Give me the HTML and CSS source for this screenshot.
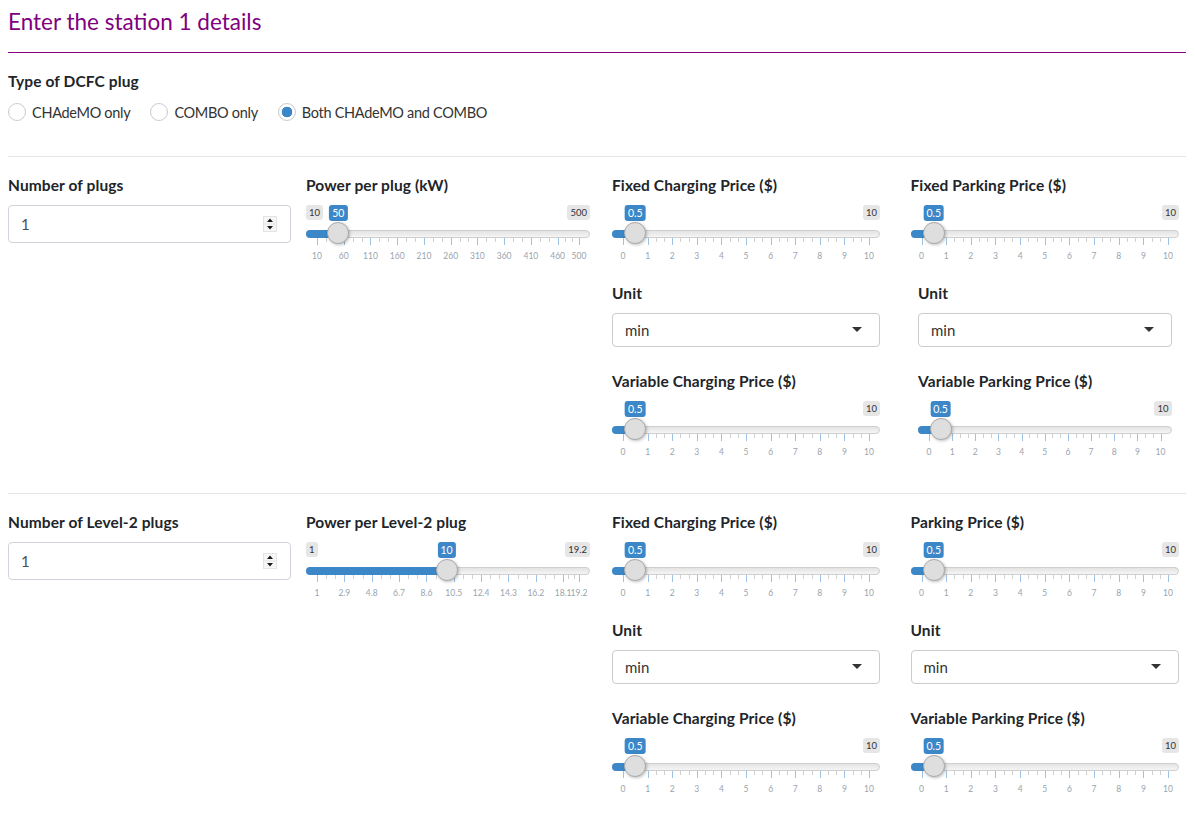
FILE: index.html
```html
<!DOCTYPE html>
<html lang="en">
<head>
<meta charset="utf-8">
<title>Station details</title>
<link rel="stylesheet" href="styles.css">
</head>
<body>
<h3 class="title">Enter the station 1 details</h3>
<hr class="rule-accent">
<div class="field-label">Type of DCFC plug</div>
<div class="radios">
  <label class="radio"><input type="radio" name="plug"><span>CHAdeMO only</span></label>
  <label class="radio"><input type="radio" name="plug"><span>COMBO only</span></label>
  <label class="radio"><input type="radio" name="plug" checked><span>Both CHAdeMO and COMBO</span></label>
</div>
<hr class="rule rule-first">

<section class="row">
  <div class="col col-a">
    <div class="field-label">Number of plugs</div>
    <div class="num-wrap">
      <input class="num" type="number" value="1">
      <svg class="spin" width="14" height="16" viewBox="0 0 14 16" aria-hidden="true"><rect width="14" height="16" fill="#e4e4e4"/><rect x="1" y="1" width="12" height="6.5" fill="#f6f6f6"/><rect x="1" y="8.5" width="12" height="6.5" fill="#f6f6f6"/><path d="M7 2.5 10 6H4zM4 10h6l-3 3.5z" fill="#1a1a1a"/></svg>
    </div>
  </div>
  <div class="col col-b">
    <div class="field-label">Power per plug (kW)</div>
    <div class="slider" data-min="10" data-max="500" data-value="50" data-ticks="10,60,110,160,210,260,310,360,410,460,500"></div>
  </div>
  <div class="col col-c">
    <div class="field-label">Fixed Charging Price ($)</div>
    <div class="slider" data-min="0" data-max="10" data-value="0.5"></div>
    <div class="field-label">Unit</div>
    <div class="select">min</div>
    <div class="field-label">Variable Charging Price ($)</div>
    <div class="slider" data-min="0" data-max="10" data-value="0.5"></div>
  </div>
  <div class="col col-d">
    <div class="field-label">Fixed Parking Price ($)</div>
    <div class="slider" data-min="0" data-max="10" data-value="0.5"></div>
    <div class="inset">
      <div class="field-label">Unit</div>
      <div class="select">min</div>
      <div class="field-label">Variable Parking Price ($)</div>
      <div class="slider" data-min="0" data-max="10" data-value="0.5"></div>
    </div>
  </div>
</section>

<hr class="rule">

<section class="row">
  <div class="col col-a">
    <div class="field-label">Number of Level-2 plugs</div>
    <div class="num-wrap">
      <input class="num" type="number" value="1">
      <svg class="spin" width="14" height="16" viewBox="0 0 14 16" aria-hidden="true"><rect width="14" height="16" fill="#e4e4e4"/><rect x="1" y="1" width="12" height="6.5" fill="#f6f6f6"/><rect x="1" y="8.5" width="12" height="6.5" fill="#f6f6f6"/><path d="M7 2.5 10 6H4zM4 10h6l-3 3.5z" fill="#1a1a1a"/></svg>
    </div>
  </div>
  <div class="col col-b">
    <div class="field-label">Power per Level-2 plug</div>
    <div class="slider" data-min="1" data-max="19.2" data-value="10" data-ticks="1,2.9,4.8,6.7,8.6,10.5,12.4,14.3,16.2,18.1,19.2"></div>
  </div>
  <div class="col col-c">
    <div class="field-label">Fixed Charging Price ($)</div>
    <div class="slider" data-min="0" data-max="10" data-value="0.5"></div>
    <div class="field-label">Unit</div>
    <div class="select">min</div>
    <div class="field-label">Variable Charging Price ($)</div>
    <div class="slider" data-min="0" data-max="10" data-value="0.5"></div>
  </div>
  <div class="col col-d">
    <div class="field-label">Parking Price ($)</div>
    <div class="slider" data-min="0" data-max="10" data-value="0.5"></div>
    <div class="field-label">Unit</div>
    <div class="select">min</div>
    <div class="field-label">Variable Parking Price ($)</div>
    <div class="slider" data-min="0" data-max="10" data-value="0.5"></div>
  </div>
</section>
<script src="slider.js"></script>
</body>
</html>
```
FILE: styles.css
```css
* { box-sizing: border-box; }
html, body { margin: 0; overflow: hidden; }
body {
  height: 819px;
  padding: 0 10px 0 8px;
  background: #fff;
  color: #212529;
  font-family: "Lato", "Noto Sans", sans-serif;
  font-size: 15px;
}
.title {
  margin: 0;
  height: 52px;
  padding-top: 8px;
  font-size: 22.5px;
  line-height: 28px;
  font-weight: 400;
  color: #800080;
}
.rule-accent { margin: 0 0 16px; height: 1px; border: 0; background: #800080; }
.rule { margin: 16px 0; height: 1px; border: 0; background: #e5e5e5; }
.rule-first { margin-top: 33px; }
.field-label {
  height: 24px;
  margin-bottom: 8px;
  font-weight: 700;
  font-size: 15.5px;
  letter-spacing: .1px;
  line-height: 24px;
  color: #212529;
}
.radios { display: flex; gap: 20px; height: 22px; }
.radio { display: flex; align-items: center; gap: 6px; color: #333; font-size: 14.5px; letter-spacing: -.3px; }
.radio input {
  appearance: none;
  margin: 0;
  width: 18px;
  height: 18px;
  border: 1px solid #c8ccd0;
  border-radius: 50%;
  background: #fff;
}
.radio input:checked {
  background: radial-gradient(circle, #3c87c7 0 5px, #fff 5.6px);
}
.row { display: grid; grid-template-columns: 298px 306px 298.5px 1fr; }
.col-a { padding-right: 15px; }
.col-b { padding-right: 22px; }
.col-c { padding-right: 30.5px; }
.col-d { padding-right: 7px; }
.inset { padding: 0 7.5px; }
.num-wrap { position: relative; }
.num {
  display: block;
  width: 100%;
  height: 38px;
  padding: 0 12px;
  border: 1px solid #ced4da;
  border-radius: 4px;
  color: #495057;
  font: 400 15px "Lato", sans-serif;
  appearance: textfield;
}
.num::-webkit-inner-spin-button { appearance: none; }
.spin { position: absolute; top: 11px; right: 14px; }
.select {
  position: relative;
  height: 34px;
  margin-bottom: 22px;
  padding-left: 12px;
  border: 1px solid #ccc;
  border-radius: 4px;
  color: #333;
  font-size: 15px;
  line-height: 33px;
}
.select::after {
  content: "";
  position: absolute;
  top: 13px;
  right: 17px;
  border-style: solid;
  border-width: 5px 5.5px 0;
  border-color: #333 transparent transparent;
}
.slider { position: relative; height: 76px; }
.badge {
  position: absolute;
  top: 0;
  height: 15px;
  padding: 0 3px;
  border-radius: 3px;
  background: #e6e6e6;
  color: #333;
  font-size: 9.5px;
  line-height: 15px;
  white-space: nowrap;
}
.badge-max { right: 0; }
.badge-min { left: 0; }
.badge-value {
  height: 16px;
  padding: 0 3px;
  background: #3c87c7;
  color: #fff;
  font-size: 10.5px;
  line-height: 16px;
  transform: translateX(-50%);
}
.track {
  position: absolute;
  top: 25px;
  left: 0;
  right: 0;
  height: 8px;
  border: 1px solid #cfcfcf;
  border-radius: 4px;
  background: linear-gradient(#e3e3e3, #f5f5f5);
}
.bar {
  position: absolute;
  top: 25px;
  left: 0;
  height: 8px;
  border-radius: 4px 0 0 4px;
  background: #3c87c7;
}
.handle {
  position: absolute;
  top: 17px;
  width: 22px;
  height: 22px;
  margin-left: -11px;
  border: 1px solid #ababab;
  border-radius: 50%;
  background: #dedede;
  box-shadow: 1px 1px 3px rgba(0, 0, 0, .25);
}
.grid { position: absolute; top: 33px; left: 11px; right: 11px; height: 30px; }
.tick { position: absolute; top: 0; width: 1px; height: 7px; background: #9cc3e5; }
.tick-minor { height: 4px; background: #cdd1d5; }
.tick-label {
  position: absolute;
  top: 12px;
  color: #99a4ae;
  font-size: 8.5px;
  line-height: 12px;
  white-space: nowrap;
  transform: translateX(-50%);
}
```
FILE: slider.js
```js
document.querySelectorAll('.slider').forEach(function (el) {
  var min = +el.dataset.min, max = +el.dataset.max, value = +el.dataset.value;
  var labels = el.dataset.ticks
    ? el.dataset.ticks.split(',')
    : ['0', '1', '2', '3', '4', '5', '6', '7', '8', '9', '10'];
  var width = el.getBoundingClientRect().width, inner = width - 22;
  var x = 11 + inner * (value - min) / (max - min);

  function add(parent, cls, text) {
    var node = document.createElement('div');
    node.className = cls;
    if (text !== undefined) node.textContent = text;
    parent.appendChild(node);
    return node;
  }

  var minBadge = add(el, 'badge badge-min', el.dataset.min);
  add(el, 'badge badge-max', el.dataset.max);
  var valueBadge = add(el, 'badge badge-value', el.dataset.value);
  valueBadge.style.left = x + 'px';
  if (x - valueBadge.offsetWidth / 2 < minBadge.offsetWidth + 4) minBadge.remove();

  add(el, 'track');
  add(el, 'bar').style.width = x + 'px';

  var grid = add(el, 'grid');
  labels.forEach(function (text, i) {
    var pos = (+text - min) / (max - min);
    add(grid, 'tick').style.left = pos * 100 + '%';
    var label = add(grid, 'tick-label', text);
    label.style.left = pos * 100 + '%';
    if (i < labels.length - 1) {
      var next = (+labels[i + 1] - min) / (max - min);
      [1, 2].forEach(function (k) {
        add(grid, 'tick tick-minor').style.left = (pos + (next - pos) * k / 3) * 100 + '%';
      });
    }
  });

  add(el, 'handle').style.left = x + 'px';
});
```
